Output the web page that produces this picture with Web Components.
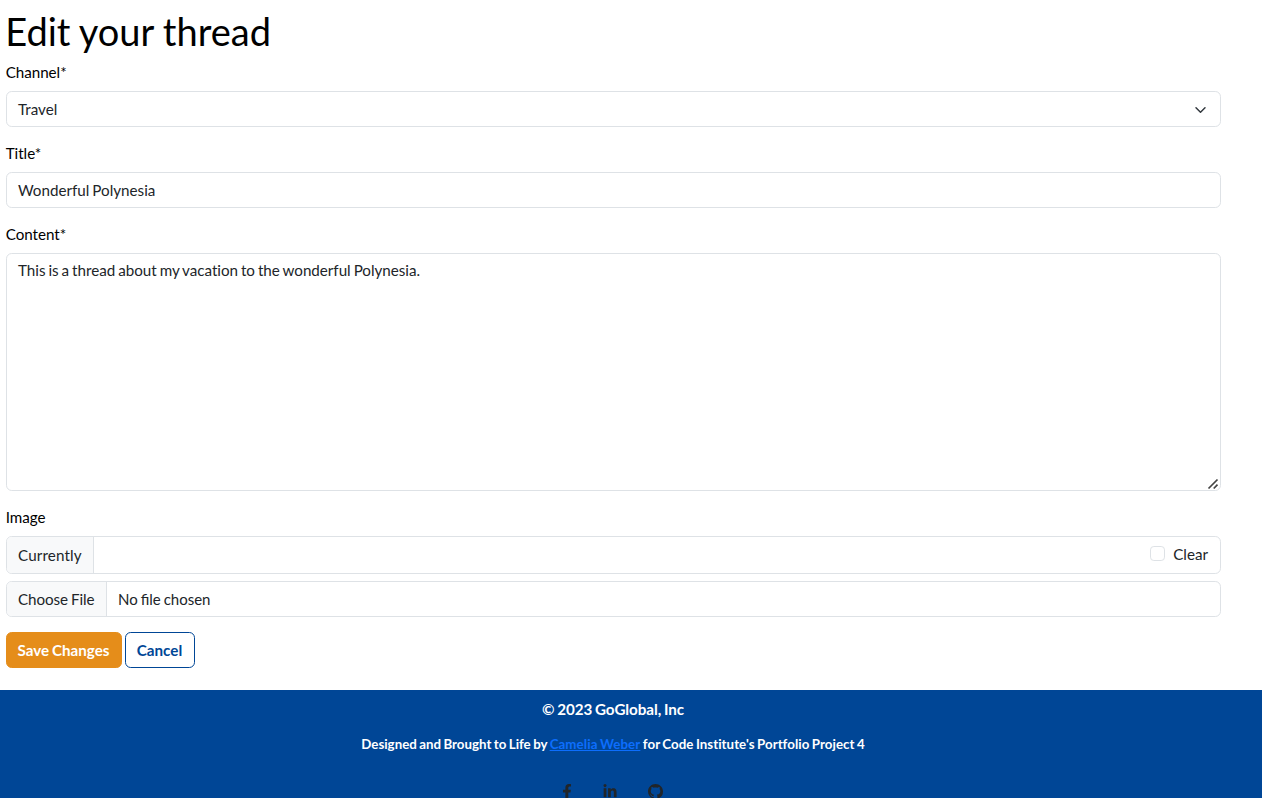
<!DOCTYPE html>
<html lang="en">
<head>
<meta charset="utf-8">
<title>Edit your thread</title>
<style>
html, body { margin: 0; height: 100%; overflow: hidden; background: #fff; }
body { font: 400 15.2px/23px Lato, "Liberation Sans", sans-serif; color: #212529; word-spacing: -0.9px; }
</style>
</head>
<body>
<thread-page></thread-page>
<script>
const define = (name, html) => customElements.define(name, class extends HTMLElement {
  constructor() {
    super();
    const t = document.createElement('template');
    t.innerHTML = html;
    this.attachShadow({ mode: 'open' }).append(t.content.cloneNode(true));
  }
});

define('form-field', `<style>
:host { display: block; margin-bottom: 15px; }
.label { display: block; height: 23px; margin-bottom: 7px; color: #000; letter-spacing: -0.04px; margin-left: -0.3px; }
</style><span class="label"><slot name="label"></slot></span><slot></slot>`);

define('field-box', `<style>
:host { display: flex; box-sizing: border-box; height: 36px; border: 1px solid #dee2e6; border-radius: 5.7px; padding: 0 11px; align-items: center; background: #fff; overflow: hidden; }
:host([kind=select]) { justify-content: space-between; padding-right: 13px; }
:host([kind=area]) { height: 238px; position: relative; align-items: flex-start; padding-top: 5px; font-variant-ligatures: none; letter-spacing: -0.015px; }
svg { display: none; }
:host([kind=select]) .chev { display: block; margin-top: 1px; }
:host([kind=area]) .grip { display: block; position: absolute; right: 1px; bottom: 0; }
</style><slot></slot>
<svg class="chev" width="13" height="12" viewBox="0 0 16 16"><path fill="none" stroke="#343a40" stroke-linecap="round" stroke-linejoin="round" stroke-width="2" d="m2 5 6 6 6-6"/></svg>
<svg class="grip" width="12" height="12" viewBox="0 0 12 12"><path fill="none" stroke="#444" stroke-width="1.7" d="M1.500 10.500 10.500 1.500M6.700 10.500 10.500 6.700"/></svg>`);

define('input-group', `<style>
:host { display: flex; box-sizing: border-box; height: 36px; border: 1px solid #dee2e6; border-radius: 5.7px; overflow: hidden; background: #fff; align-items: stretch; }
:host([kind=current]) { height: 38px; margin-bottom: 7px; }
.addon { display: flex; box-sizing: border-box; width: 100px; align-items: center; padding: 0 11px; background: #f8f9fa; border-right: 1px solid #dee2e6; white-space: nowrap; letter-spacing: -0.07px; }
:host([kind=current]) .addon { width: 87px; letter-spacing: 0.14px; }
.body { flex: 1; display: flex; align-items: center; padding: 0 12px 0 11px; }
:host(:not([kind=current])) .body { font-size: 15px; }
:host([kind=current]) .body { justify-content: flex-end; padding-bottom: 2px; }
</style><span class="addon"><slot name="addon"></slot></span><div class="body"><slot></slot></div>`);

define('check-box', `<style>
:host { display: flex; align-items: center; gap: 8px; }
i { box-sizing: border-box; width: 15px; height: 15px; border: 1px solid #dee2e6; border-radius: 3.8px; margin-top: -1px; }
</style><i></i><span><slot></slot></span>`);

define('action-button', `<style>
:host { display: flex; box-sizing: border-box; height: 36px; align-items: center; justify-content: center; width: 70px; border: 1px solid #004696; border-radius: 5.7px; color: #004696; background: #fff; font-weight: 700; white-space: nowrap; padding-right: 1px; }
:host([primary]) { width: 116px; color: #fff; background: #e58d1a; border-color: #e58d1a; }
</style><slot></slot>`);

define('social-icons', `<style>
:host { display: flex; justify-content: center; align-items: flex-start; height: 15px; color: #212529; margin-right: 1px; }
svg { display: block; fill: currentColor; }
.in { margin: 0 31px 0 31px; }
</style>
<svg width="10" height="15" viewBox="0 0 320 512"><path d="M279.1 288l14.200-92.700h-88.900v-60.100c0-25.400 12.400-50.100 52.200-50.100h40.400V6.300S260.400 0 225.400 0c-73.200 0-121.100 44.400-121.100 124.700v70.600H22.900V288h81.400v224h100.200V288z"/></svg>
<svg class="in" width="14" height="15" viewBox="0 0 448 512"><path d="M100.300 448H7.400V148.900h92.900zM53.800 108.100C24.100 108.100 0 83.500 0 53.800a53.800 53.800 0 0 1 107.600 0c0 29.700-24.100 54.300-53.800 54.300zM447.900 448h-92.700V302.400c0-34.700-.7-79.200-48.300-79.200-48.300 0-55.700 37.700-55.700 76.700V448h-92.800V148.900h89.100v40.800h1.300c12.400-23.500 42.700-48.300 87.900-48.300 94 0 111.300 61.900 111.300 142.300V448z"/></svg>
<svg width="15" height="15" viewBox="0 0 16 16"><path d="M8 0C3.580 0 0 3.580 0 8c0 3.540 2.290 6.530 5.470 7.590.4.070.55-.17.55-.38 0-.19-.01-.82-.01-1.490-2.010.37-2.530-.49-2.690-.94-.09-.23-.48-.94-.82-1.130-.28-.15-.68-.52-.01-.53.63-.01 1.080.58 1.230.82.72 1.210 1.870.87 2.330.66.07-.52.28-.87.51-1.070-1.780-.2-3.640-.89-3.640-3.950 0-.87.31-1.590.82-2.150-.08-.2-.36-1.020.08-2.120 0 0 .67-.21 2.200.82.64-.18 1.320-.27 2-.27s1.360.09 2 .27c1.530-1.040 2.200-.82 2.200-.82.44 1.100.16 1.920.08 2.120.51.56.82 1.270.82 2.150 0 3.070-1.870 3.750-3.650 3.950.29.25.54.73.54 1.480 0 1.070-.01 1.930-.01 2.200 0 .21.15.46.55.38A8.010 8.010 0 0 0 16 8c0-4.420-3.580-8-8-8z"/></svg>`);

define('site-footer', `<style>
:host { display: block; flex: 1; background: #004696; color: #fff; font-weight: 700; text-align: center; padding: 8px 36px 0 0; overflow: hidden; font-variant-ligatures: none; }
div { height: 23px; letter-spacing: -0.05px; }
.credit { font-size: 13.3px; margin: 12px 0 28px; word-spacing: -0.8px; letter-spacing: 0; }
a { color: #0d6efd; text-decoration: underline; letter-spacing: 0.1px; }
.tail { letter-spacing: 0.04px; }
</style><div>© 2023 GoGlobal, Inc</div>
<div class="credit">Designed and Brought to Life by <a>Camelia Weber</a><span class="tail"> for Code Institute's Portfolio Project 4</span></div>
<social-icons></social-icons>`);

define('thread-page', `<style>
:host { display: flex; flex-direction: column; height: 798px; box-sizing: border-box; }
main { width: 1215px; padding: 8px 0 0 6px; height: 682px; flex: none; }
h1 { margin: 0 0 7px -0.7px; font-size: 38px; line-height: 46px; font-weight: 400; color: #000; word-spacing: -0.5px; }
.actions { display: flex; gap: 3px; }
</style><main>
<h1>Edit your thread</h1>
<form-field><span slot="label">Channel*</span><field-box kind="select">Travel</field-box></form-field>
<form-field><span slot="label">Title*</span><field-box>Wonderful Polynesia</field-box></form-field>
<form-field><span slot="label">Content*</span><field-box kind="area">This is a thread about my vacation to the wonderful Polynesia.</field-box></form-field>
<form-field><span slot="label">Image</span>
<input-group kind="current"><span slot="addon">Currently</span><check-box>Clear</check-box></input-group>
<input-group><span slot="addon">Choose File</span>No file chosen</input-group></form-field>
<div class="actions"><action-button primary>Save Changes</action-button><action-button>Cancel</action-button></div>
</main><site-footer></site-footer>`);
</script>
</body>
</html>
